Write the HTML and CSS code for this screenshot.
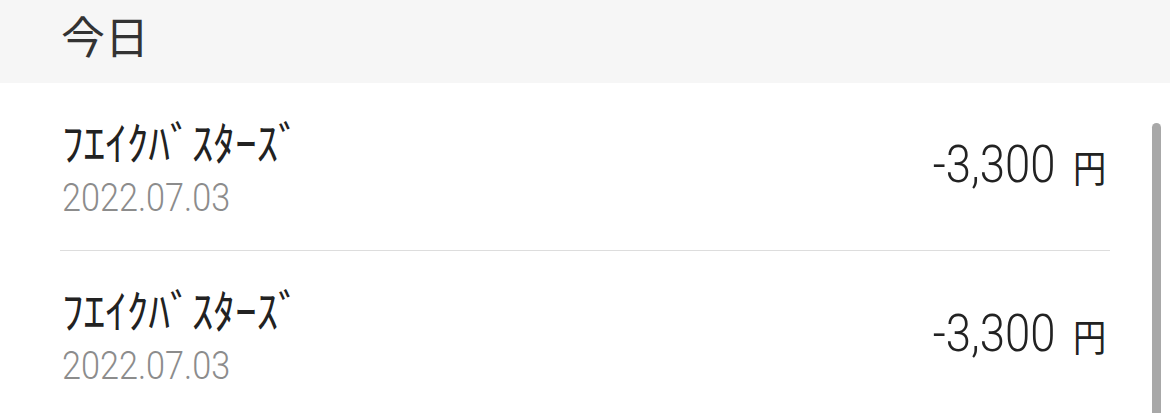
FILE: index.html
```html
<!DOCTYPE html>
<html lang="ja">
<head>
<meta charset="utf-8">
<link rel="stylesheet" href="styles.css">
</head>
<body>
<div class="page">
  <header class="section-head">今日</header>
  <ul class="list">
    <li class="row">
      <div class="info">
        <div class="title"><span class="sx sx-title">ﾌｴｲｸﾊﾞｽﾀｰｽﾞ</span></div>
        <div class="date"><span class="sx sx-date">2022.07.03</span></div>
      </div>
      <div class="amount"><span class="sx sx-r"><span class="num">-3,300</span><span class="yen">円</span></span></div>
    </li>
    <li class="row">
      <div class="info">
        <div class="title"><span class="sx sx-title">ﾌｴｲｸﾊﾞｽﾀｰｽﾞ</span></div>
        <div class="date"><span class="sx sx-date">2022.07.03</span></div>
      </div>
      <div class="amount"><span class="sx sx-r"><span class="num">-3,300</span><span class="yen">円</span></span></div>
    </li>
  </ul>
  <div class="scrollbar"></div>
</div>
</body>
</html>
```
FILE: styles.css
```css
html, body {
  margin: 0;
  padding: 0;
  background: #ffffff;
}
body {
  font-family: Roboto, "Noto Sans CJK JP", sans-serif;
  overflow: hidden;
}
.page {
  position: relative;
  width: 1170px;
  height: 413px;
  overflow: hidden;
}
.sx {
  display: inline-block;
  transform: scaleX(0.875);
  transform-origin: left center;
  white-space: nowrap;
}
.sx-title {
  transform: scaleX(0.94);
}
.sx-date {
  transform: scaleX(0.9);
}
.sx-r {
  transform-origin: right center;
}
.section-head {
  height: 83px;
  background: #f6f6f6;
  box-sizing: border-box;
  padding: 7px 0 0 61px;
  font-family: "Noto Sans CJK JP", sans-serif;
  font-size: 44px;
  line-height: 56px;
  color: #333333;
}
.list {
  list-style: none;
  margin: 0;
  padding: 0;
}
.row {
  margin: 0 60px;
  height: 168px;
  box-sizing: border-box;
  border-bottom: 1px solid #dddddd;
  display: flex;
  align-items: center;
  justify-content: space-between;
}
.row:last-child {
  border-bottom: none;
}
.info {
  display: flex;
  flex-direction: column;
  padding-left: 2px;
}
.title {
  font-family: "Noto Sans CJK JP", sans-serif;
  font-size: 46px;
  line-height: 52px;
  color: #222222;
}
.date {
  font-family: Roboto, sans-serif;
  font-weight: 300;
  font-size: 38px;
  line-height: 44px;
  color: #8c8c8c;
  margin-top: 10px;
}
.amount {
  padding: 0 4px 4px 0;
  color: #222222;
}
.num {
  font-family: Roboto, sans-serif;
  font-weight: 300;
  font-size: 52px;
}
.yen {
  font-family: "Noto Sans CJK JP", sans-serif;
  font-size: 38px;
  margin-left: 20px;
}
.scrollbar {
  position: absolute;
  left: 1152px;
  top: 123px;
  width: 9px;
  bottom: 0;
  background: #a8a8a8;
  border-radius: 5px 5px 0 0;
}
```
